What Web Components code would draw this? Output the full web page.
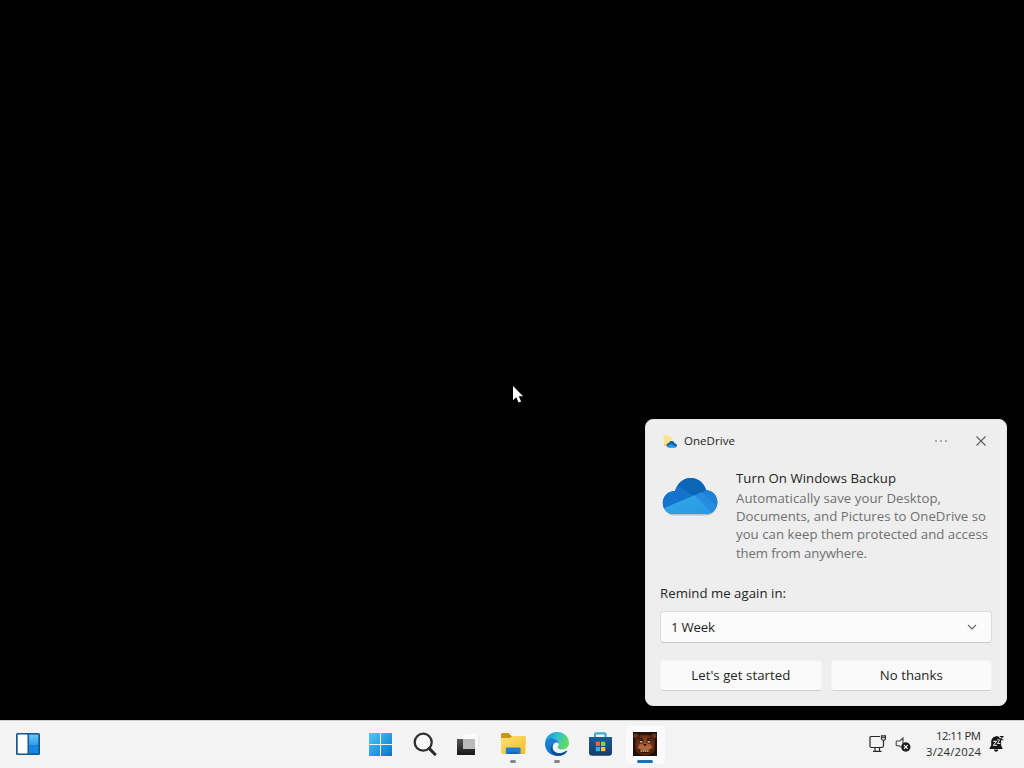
<!DOCTYPE html>
<html lang="en"><head><meta charset="utf-8"><title>Desktop</title>
<style>html,body{margin:0;background:#000;overflow:hidden}</style></head><body>
<win-desktop></win-desktop>
<script>
const define=(name,html,setup)=>customElements.define(name,class extends HTMLElement{
  constructor(){super();this.attachShadow({mode:'open'}).innerHTML=html;}
  connectedCallback(){if(setup)setup(this);}
});

/* One line of text whose tracking adapts to the given width */
define('text-line',`<style>:host{display:block;white-space:nowrap}span{display:inline-block}</style><span><slot></slot></span>`,el=>{
  const w=+el.getAttribute('width'),s=el.shadowRoot.querySelector('span'),n=el.textContent.length;
  const cur=s.getBoundingClientRect().width;
  if(w&&cur){const ls=(w-cur)/(n-1);s.style.letterSpacing=ls+'px';s.style.marginRight=-ls+'px';}
});

const icons={
widgets:`<svg width="26" height="26" viewBox="0 0 26 26"><defs><linearGradient id="a" x2="0" y2="1"><stop stop-color="#68c8f6"/><stop offset="1" stop-color="#2b9bea"/></linearGradient></defs><rect x="1" y="2" width="24" height="22" rx="1.5" fill="#17578e"/><rect x="2.7" y="3.6" width="9.8" height="18.8" rx=".6" fill="#fcfdfe"/><path d="M14 3.6h9.3v10.9H14z" fill="url(#a)"/><path d="M14 14.5h9.3v7.9H14z" fill="#148be0"/></svg>`,
start:`<svg width="26" height="26" viewBox="0 0 26 26"><defs><linearGradient id="a" gradientUnits="userSpaceOnUse" x1="2" y1="2" x2="24" y2="24"><stop stop-color="#4fcbf5"/><stop offset="1" stop-color="#0878d0"/></linearGradient></defs><path fill="url(#a)" d="M2 2h11v11H2zM14 2h11v11H14zM2 14h11v11H2zM14 14h11v11H14z"/></svg>`,
search:`<svg width="26" height="26" viewBox="0 0 26 26" fill="none"><circle cx="12.2" cy="11.2" r="8.5" fill="#f8f8f8" stroke="#303030" stroke-width="2.3"/><path d="M18.2 17.4l5.7 5.8" stroke="#292929" stroke-width="3" stroke-linecap="round"/></svg>`,
tasks:`<svg width="28" height="26" viewBox="0 0 28 26"><defs><linearGradient id="a" x2="0" y2="1"><stop stop-color="#555"/><stop offset="1" stop-color="#171717"/></linearGradient></defs><path d="M9 3h14.5v14H9z" fill="#fbfbfb"/><path d="M25 6v10" stroke="#e7e7e7"/><path d="M3 8h18v16H3z" fill="url(#a)"/><path d="M9 8h12v10H9z" fill="#bbb"/></svg>`,
folder:`<svg width="28" height="26" viewBox="0 0 28 26"><defs><linearGradient id="a" x2="1" y2="1"><stop stop-color="#ffe177"/><stop offset="1" stop-color="#f6bd20"/></linearGradient></defs><path d="M2 3.5Q2 2 3.5 2h6l3 3H25q1.4 0 1.4 1.5V14H2z" fill="#c79618"/><path d="M2 7h9l2.5-2H25q1.4 0 1.4 1.4v15q0 1.6-1.7 1.6h-21Q2 23 2 21.3z" fill="url(#a)"/><path d="M6.8 23v-5.2q0-1.4 1.4-1.4h12q1.4 0 1.4 1.4V23z" fill="#1b7fd2"/><path d="M9.5 23v-2.2h9.5V23z" fill="#1168b9"/></svg>`,
edge:`<svg width="26" height="26" viewBox="0 0 26 26"><defs><linearGradient id="a" x2="1" y2=".4"><stop stop-color="#1688d9"/><stop offset=".5" stop-color="#2cbfd4"/><stop offset="1" stop-color="#62dc62"/></linearGradient><linearGradient id="b" x2=".6" y2="1"><stop stop-color="#1789dc"/><stop offset="1" stop-color="#1268bd"/></linearGradient></defs><path d="M1 12C1.8 5 7 1 13 1c7 0 12 5 12 10.7 0 4.2-3.4 6.7-7 6.7-2.8 0-4.5-1-4.5-1.9 0-.8 1.2-1.2 1.2-3.3C14.7 9 10.8 7 7.2 7 4.4 7 2.2 8.8 1 12z" fill="url(#a)"/><path d="M1 12.8C1.3 8.5 4.2 6.9 7.2 6.9c4 0 7.5 2.5 7.5 6-1.8-2.6-6-1.3-6 3.1 0 5 5.6 7.4 10 5.5l4-1.8c.6-.2.8.2.5.7C21.2 23.4 17.5 25 13.6 25 6.5 25 1 19.7 1 12.8z" fill="url(#b)"/><path d="M9.4 12.8c-3.5 6 1 10.2 7 9.5 2.6-.3 4.7-1.8 6.5-2.4-2 3.3-5.2 4.9-8.5 4.9-7 0-10-7-5-12z" fill="#0d4c8e"/></svg>`,
store:`<svg width="26" height="26" viewBox="0 0 26 26"><defs><linearGradient id="a" x2="0" y2="1"><stop stop-color="#195d98"/><stop offset="1" stop-color="#123b6b"/></linearGradient></defs><path d="M8 8V3.3q0-1 1-1h8.5q1 0 1 1V8" fill="none" stroke="#44a9d0" stroke-width="2.2"/><path d="M2 6h23v15.5q0 3.3-3.3 3.3H5.3Q2 24.8 2 21.5z" fill="url(#a)"/><path fill="#ef6148" d="M8.8 10.7H13V15H8.8z"/><path fill="#8bcf43" d="M14 10.7h4.3V15H14z"/><path fill="#35aef1" d="M8.8 16H13v4.2H8.8z"/><path fill="#f8c52c" d="M14 16h4.3v4.2H14z"/></svg>`,
bear:`<svg width="24" height="24" viewBox="0 0 24 24"><defs><radialGradient id="a"><stop stop-color="#a3522a"/><stop offset=".7" stop-color="#7a3516"/><stop offset="1" stop-color="#4a210f"/></radialGradient></defs><path fill="#1d0f0a" d="M0 0h24v24H0z"/><circle cx="3" cy="4" r="2.6" fill="#6b3218"/><circle cx="21" cy="4" r="2.6" fill="#6b3218"/><path d="M2 9Q3 2 12 2t10 7v7q-1 7-10 7.500Q3 23 2 16z" fill="url(#a)"/><path d="M7.500 0h9v2.800h-9z" fill="#29120d"/><path d="M5 6.300l5 1M19 6.300l-5 1" stroke="#35150c" stroke-width="1.500"/><ellipse cx="8" cy="9.700" rx="2.700" ry="1.900" fill="#2b1610"/><ellipse cx="16" cy="9.700" rx="2.700" ry="1.900" fill="#2b1610"/><path d="M6.700 9.300h2.800v1.300H6.700zM14.500 9.300h2.800v1.300h-2.800z" fill="#eee1cd"/><ellipse cx="12" cy="15" rx="6.800" ry="3.600" fill="#b0663a"/><path d="M10.200 12h3.600l-.8 1.800h-2z" fill="#2a1209"/><path d="M5.500 17q6.500 2.600 13 0l-1 3.200q-5.500 2.600-11 0z" fill="#35150b"/><path d="M7.500 19h9" stroke="#d9bd8b" stroke-width="1.500" stroke-dasharray="1.600 .5"/></svg>`,
network:`<svg width="18" height="18" viewBox="0 0 18 18" fill="none" stroke="#292929" stroke-width="1.2"><path d="M11 1.5H2q-1 0-1 1V11q0 1.500 1.300 1.500h10.400q1.800 0 1.800-1.800V6M6 12.500V16m4.500-3.500V16M4 16.400h8.500"/><path d="M12.500.8h3.900v3q0 1.500-1.900 1.500t-2-1.500z"/><path d="M12.500 2.600h3.900" stroke-width=".9"/></svg>`,
sound:`<svg width="17" height="18" viewBox="0 0 17 18"><path d="M8 11.800V3L4.800 6H2Q1.200 6 1.200 6.800v3.100q0 .8.800.8h2.300l1.500 1.500" fill="none" stroke="#444" stroke-width="1.150"/><circle cx="10.800" cy="12" r="4.700" fill="#202020"/><path d="M9 10.200l3.600 3.600m0-3.600L9 13.800" stroke="#fff" stroke-width="1.100"/></svg>`,
bell:`<svg width="18" height="18" viewBox="0 0 18 18"><path d="M10.500 1.500C6.500.5 3.200 3 3.200 7v3.600l-1.500 2.200v1.100h12.700v-1.100l-1.300-2.200V5z" fill="#171717"/><path d="M6 14.500h4.200q-.2 2.200-2.100 2.200T6 14.500" fill="#171717"/><path d="M5.300 6.300h3.300l-3.300 4h3.600" fill="none" stroke="#fff"/><path d="M9.200 4.800h2.700L9.400 8.500h2.900" fill="none" stroke="#fff" stroke-width=".9"/><path d="M11.800 1.500h3l-2.800 3.300h3.300" fill="none" stroke="#171717" stroke-width="1.100"/></svg>`,
cloud:`<svg width="56" height="39" viewBox="0 0 56 39"><defs><clipPath id="c"><path d="M12 37C5 36.800.8 32.200.8 26c0-6.500 5-12 12.200-12C15.500 6.500 21 1 28.400 1c7.200 0 13 4 15.800 12.200C50.500 13.300 55.400 18.400 55.400 25c0 7-5 12-11.700 12z"/></clipPath><linearGradient id="g" x2="1" y2="1"><stop stop-color="#36a8e6"/><stop offset="1" stop-color="#2399e6"/></linearGradient></defs><path d="M3 33q3 5.500 9 5.500h31.500q7 0 10-5.500z" fill="#a6a8a8" opacity=".65"/><g clip-path="url(#c)"><path d="M0 0h56v38H0z" fill="#126bc3"/><path d="M12 0h33v14L32 20 12 7z" fill="#0c66b8"/><path d="M0 9h16l16 10L0 33z" fill="#1473cc"/><path d="M32 19l13-6 12 4v20z" fill="#1e83d7"/><path d="M0 32l33-14 23 20H0z" fill="url(#g)"/><path d="M33 18l7-3 16 16v2l-5 4z" fill="#258cdf"/></g></svg>`,
mini:`<svg width="16" height="15" viewBox="0 0 16 15"><path d="M1.500 1.600Q1.500 1 2.500 1h3l1 1.200H8Q9.500 2.300 9.500 4v8.500L3 11q-1-.2-1-1z" fill="#ffe38a"/><path d="M2 10h5v3L2.500 12z" fill="#f5cc68"/><path d="M7 13.400c-1.700 0-2.300-1-2.300-2.200 0-1.300 1-2.100 2-2.200C7.500 7.400 8.800 6.800 10 7c1.500.2 2.400 1.200 2.600 2.300 1.400.1 2.300 1 2.300 2.100 0 1.200-.9 2-2 2z" fill="#1260ac"/><path d="M5 12l4.300-2 4.700 2.800-1 .6H7q-1.500 0-2-1.400z" fill="#299dde"/></svg>`,
dots:`<svg width="14" height="6" viewBox="0 0 14 6"><g fill="#666"><circle cx="2" cy="3" r=".85"/><circle cx="7" cy="3" r=".85"/><circle cx="12" cy="3" r=".85"/></g></svg>`,
close:`<svg width="12" height="12" viewBox="0 0 12 12"><path d="M1.500 1.500l9 9m0-9l-9 9" stroke="#5c5c5c" stroke-width="1.100"/></svg>`,
chevron:`<svg width="12" height="10" viewBox="0 0 12 10"><path d="M2 3l4 4 4-4" fill="none" stroke="#666" stroke-width="1.150"/></svg>`,
pointer:`<svg width="13" height="20" viewBox="0 0 13 20"><path d="M1 1v14.200l3.200-3 2.400 5.300 2.500-1.100-2.300-5.100h4.300z" fill="#fff"/></svg>`};
define('ui-icon','<style>:host{display:block;flex:none}svg{display:block}</style><div></div>',el=>el.shadowRoot.querySelector('div').innerHTML=icons[el.getAttribute('name')]);

define('task-button',`<style>:host{display:grid;box-sizing:border-box;position:relative;width:44px;height:47px;padding-bottom:2px;place-items:center}
:host([open]){padding-left:2px}:host([active]){padding-left:2px}
:host([active])::before{content:"";position:absolute;inset:4px 1px 4px 4px;background:#fafafa;border-radius:4px;box-shadow:0 0 1px #e6e6e6}
::slotted(*){position:relative}
:host([open])::after{content:"";position:absolute;bottom:5px;left:50%;width:6px;height:3px;margin-left:-2px;border-radius:2px;background:#868686}
:host([active])::after{content:"";position:absolute;bottom:5px;left:50%;width:16px;height:3px;margin-left:-7px;border-radius:2px;background:#1473bf}</style><slot></slot>`);

define('action-button',`<style>:host{display:flex;box-sizing:border-box;height:31px;align-items:center;justify-content:center;border-radius:4px;background:#fafafa;border:1px solid #f4f4f4;border-bottom-color:#cfcfcf;padding-bottom:1px;line-height:20px}</style><slot></slot>`);

define('select-box',`<style>:host{display:flex;box-sizing:border-box;height:32px;align-items:center;justify-content:space-between;border-radius:4px;background:#fbfbfb;border:1px solid #dcdcdc;border-bottom-color:#c8c8c8;padding:0 13px 0 10px;line-height:20px}</style><slot></slot><ui-icon name="chevron"></ui-icon>`);

define('toast-card',`<style>:host{display:block;box-sizing:border-box;width:362px;height:287px;background:#eee;border:1px solid #e5e5e5;border-radius:8px;color:#242424;font:13.2px/18.4px "Open Sans","Noto Sans",sans-serif;padding:0 14px}
header{display:flex;align-items:center;height:42px;font-size:11.5px;padding:0 5px 0 2px}
header text-line{margin-left:6px;padding-top:1px;flex:1}header ui-icon:last-child{margin-left:27px}
main{display:grid;grid-template-columns:56px 1fr;gap:18px;padding:6px 0 0 2px;height:103px;box-sizing:border-box}
main ui-icon{margin-top:9px}.t{line-height:20px;margin-bottom:.6px}.d{color:#707070}
.q{margin-top:18px;height:28px;line-height:20px}
footer{display:grid;grid-template-columns:1fr 1fr;gap:9px;margin:17px 0 0}
</style><header><ui-icon name="mini"></ui-icon><text-line width="51">OneDrive</text-line><ui-icon name="dots"></ui-icon><ui-icon name="close"></ui-icon></header>
<main><ui-icon name="cloud"></ui-icon><div><text-line class="t" width="160">Turn On Windows Backup</text-line><text-line class="d" width="205">Automatically save your Desktop,</text-line><text-line class="d" width="250">Documents, and Pictures to OneDrive so</text-line><text-line class="d" width="252">you can keep them protected and access</text-line><text-line class="d" width="131">them from anywhere.</text-line></div></main>
<text-line class="q" width="126">Remind me again in:</text-line>
<select-box><text-line width="44">1 Week</text-line></select-box>
<footer><action-button><text-line width="99">Let's get started</text-line></action-button><action-button><text-line width="63">No thanks</text-line></action-button></footer>`);

define('system-tray',`<style>:host{display:flex;align-items:center;justify-content:flex-end;padding:0 18px 2px 0;color:#2b2b2b;font:11.3px/16px "Open Sans","Noto Sans",sans-serif}
ui-icon+ui-icon{margin-left:8px}.clock{display:flex;flex-direction:column;align-items:flex-end;margin:0 7px 0 14px;padding-top:1px}</style>
<ui-icon name="network"></ui-icon><ui-icon name="sound"></ui-icon><div class="clock"><text-line width="45">12:11 PM</text-line><text-line width="55">3/24/2024</text-line></div><ui-icon name="bell"></ui-icon>`);

define('task-bar',`<style>:host{display:grid;grid-template-columns:358px 308px 358px;box-sizing:border-box;height:48px;border-top:1px solid #cfcfcf;background:#f3f3f3}
nav{display:flex}.left{padding-left:6px}</style><nav class="left"><task-button><ui-icon name="widgets"></ui-icon></task-button></nav>
<nav><task-button><ui-icon name="start"></ui-icon></task-button><task-button><ui-icon name="search"></ui-icon></task-button><task-button><ui-icon name="tasks"></ui-icon></task-button><task-button open><ui-icon name="folder"></ui-icon></task-button><task-button open><ui-icon name="edge"></ui-icon></task-button><task-button><ui-icon name="store"></ui-icon></task-button><task-button active><ui-icon name="bear"></ui-icon></task-button></nav><system-tray></system-tray>`);

define('win-desktop',`<style>:host{display:flex;flex-direction:column;width:1024px;height:768px;background:#000}
main{position:relative;flex:1;display:flex;align-items:flex-end;justify-content:flex-end;padding:0 17px 14px 0}
.cursor{position:absolute;left:512px;top:385px}</style><main><toast-card></toast-card><ui-icon class="cursor" name="pointer"></ui-icon></main><task-bar></task-bar>`);
</script></body></html>
